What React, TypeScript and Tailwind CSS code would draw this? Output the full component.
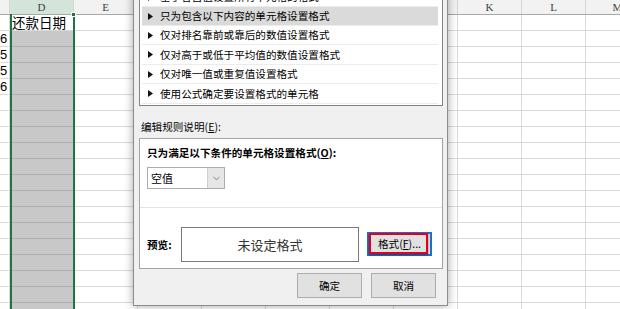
import React from 'react';
import { ChevronDown } from 'lucide-react';

const CJK = "font-['Noto_Sans_CJK_SC','Noto_Sans',sans-serif]";

const COLUMNS = [
    { name: 'C', w: 'w-[10px]' },
    { name: 'D', w: 'w-[64px]' },
    { name: 'E', w: 'w-[64px]' },
    { name: 'F', w: 'w-[64px]' },
    { name: 'G', w: 'w-[64px]' },
    { name: 'H', w: 'w-[64px]' },
    { name: 'I', w: 'w-[64px]' },
    { name: 'J', w: 'w-[64px]' },
    { name: 'K', w: 'w-[64px]' },
    { name: 'L', w: 'w-[64px]' },
    { name: 'M', w: 'w-[64px]' },
];

const C_VALUES: Record<number, string> = { 1: '6', 2: '5', 3: '5', 4: '6' };

const RULES = [
    { text: '基于各自值设置所有单元格的格式', h: 'h-[19px]' },
    { text: '只为包含以下内容的单元格设置格式', h: 'h-[19px]', active: true },
    { text: '仅对排名靠前或靠后的数值设置格式', h: 'h-[19px]' },
    { text: '仅对高于或低于平均值的数值设置格式', h: 'h-[20px]' },
    { text: '仅对唯一值或重复值设置格式', h: 'h-[19px]' },
    { text: '使用公式确定要设置格式的单元格', h: 'h-[20px]' },
];

function Arrow() {
    return (
        <svg width="5" height="7" viewBox="0 0 5 7" className="shrink-0">
            <polygon points="0,0 5,3.5 0,7" fill="#111" />
        </svg>
    );
}

function Sheet() {
    const rows = Array.from({ length: 19 }, (_, i) => i);
    return (
        <div className="flex flex-col">
            <div className="flex h-[15px] border-b border-[#a8a8a8] bg-[#f2f2f2]">
                {COLUMNS.map((c) => (
                    <div
                        key={c.name}
                        className={`${c.w} shrink-0 border-r border-[#d6d6d6] text-center font-['Liberation_Serif',serif] text-[11px] leading-[14px] text-[#404040] ${
                            c.name === 'D' ? 'bg-[#d3e5d8]' : ''
                        }`}
                    >
                        {c.name === 'C' ? '' : c.name}
                    </div>
                ))}
            </div>
            {rows.map((r) => (
                <div key={r} className="flex h-[16px]">
                    {COLUMNS.map((c) => {
                        if (c.name === 'C') {
                            return (
                                <div
                                    key={c.name}
                                    className={`${c.w} shrink-0 border-r border-b border-[#dadada] pr-[2px] text-right font-['Liberation_Sans',sans-serif] text-[13px] leading-[15px] text-black`}
                                >
                                    {C_VALUES[r] ?? ''}
                                </div>
                            );
                        }
                        if (c.name === 'D') {
                            return r === 0 ? (
                                <div
                                    key={c.name}
                                    className={`${c.w} shrink-0 border-b border-[#dadada] bg-white pl-[2px] ${CJK} text-[13.5px] leading-[15px] text-black`}
                                >
                                    还款日期
                                </div>
                            ) : (
                                <div key={c.name} className={`${c.w} shrink-0 border-b border-[#aeaeae] bg-[#c8c8c8]`} />
                            );
                        }
                        return <div key={c.name} className={`${c.w} shrink-0 border-r border-b border-[#dadada]`} />;
                    })}
                </div>
            ))}
        </div>
    );
}

function Dialog() {
    return (
        <div
            className={`absolute top-[-30px] left-[133px] w-[315px] border border-[#8c8c8c] bg-[#f0f0f0] pr-[4px] pb-[7px] pl-[5px] shadow-[0_0_9px_rgba(0,0,0,0.35)] ${CJK} text-[10.6px] text-black`}
        >
            <div className="mt-[10px] border border-[#828282] bg-white pt-[6px] pr-[4px] pb-[1px] pl-[2px]">
                {RULES.map((rule) => (
                    <div
                        key={rule.text}
                        className={`flex ${rule.h} items-center border-b border-[#ececec] pl-[6px] leading-[14px] ${
                            rule.active ? 'bg-[#dadada]' : ''
                        }`}
                    >
                        <Arrow />
                        <span className="ml-[7px]">{rule.text}</span>
                    </div>
                ))}
            </div>

            <div className="mt-[14px] ml-[2px] h-[14px] leading-[14px]">
                编辑规则说明(<span className="underline">E</span>):
            </div>

            <div className="mt-[4px] border border-[#a3a3a3] bg-white">
                <div className="h-[69px] border-b border-[#e3e3e3] pt-[7px] pl-[7px]">
                    <div className="h-[14px] leading-[14px] font-bold">
                        只为满足以下条件的单元格设置格式(<span className="underline">O</span>):
                    </div>
                    <div className="mt-[7px] flex h-[22px] w-[78px] border border-[#acacac] bg-white">
                        <div className="flex flex-1 items-center pl-[3px] text-[11px]">空值</div>
                        <div className="flex w-[17px] items-center justify-center border-l border-[#cfcfcf] bg-[#e6e6e6]">
                            <ChevronDown size={11} strokeWidth={1.5} color="#555" />
                        </div>
                    </div>
                </div>
                <div className="flex h-[60px] items-start pt-[19px] pl-[7px]">
                    <div className="flex h-[35px] w-[34px] items-center font-bold">预览:</div>
                    <div className="flex h-[35px] w-[178px] items-center justify-center border border-[#7a7a7a] bg-white text-[13px] text-[#333]">
                        未设定格式
                    </div>
                    <div className="relative mt-[5px] ml-[8px] flex h-[24px] w-[65px] items-center justify-center border-2 border-[#1c6fd0] bg-[#e1e1e1]">
                        <span>
                            格式(<span className="underline">F</span>)...
                        </span>
                        <div className="absolute top-[-1px] right-[2px] bottom-[0px] left-[0px] border-2 border-[#e2001a] shadow-[0_1px_2px_rgba(0,0,0,0.45)]" />
                    </div>
                </div>
            </div>

            <div className="mt-[4px] flex justify-end gap-[9px] pr-[7px]">
                <div className="flex h-[25px] w-[65px] items-center justify-center border border-[#adadad] bg-[#e1e1e1]">
                    确定
                </div>
                <div className="flex h-[25px] w-[65px] items-center justify-center border border-[#adadad] bg-[#e1e1e1]">
                    取消
                </div>
            </div>
        </div>
    );
}

function App() {
    return (
        <div className="relative h-[309px] w-[620px] overflow-hidden bg-white">
            <Sheet />
            {/* selection border around column D */}
            <div className="absolute top-[14px] left-[10px] h-[300px] w-[65px] border-x-2 border-[#217346]" />
            <div className="absolute top-[12px] left-[71px] h-[5px] w-[5px] border border-white bg-[#217346]" />
            <Dialog />
        </div>
    );
}

export default App;
